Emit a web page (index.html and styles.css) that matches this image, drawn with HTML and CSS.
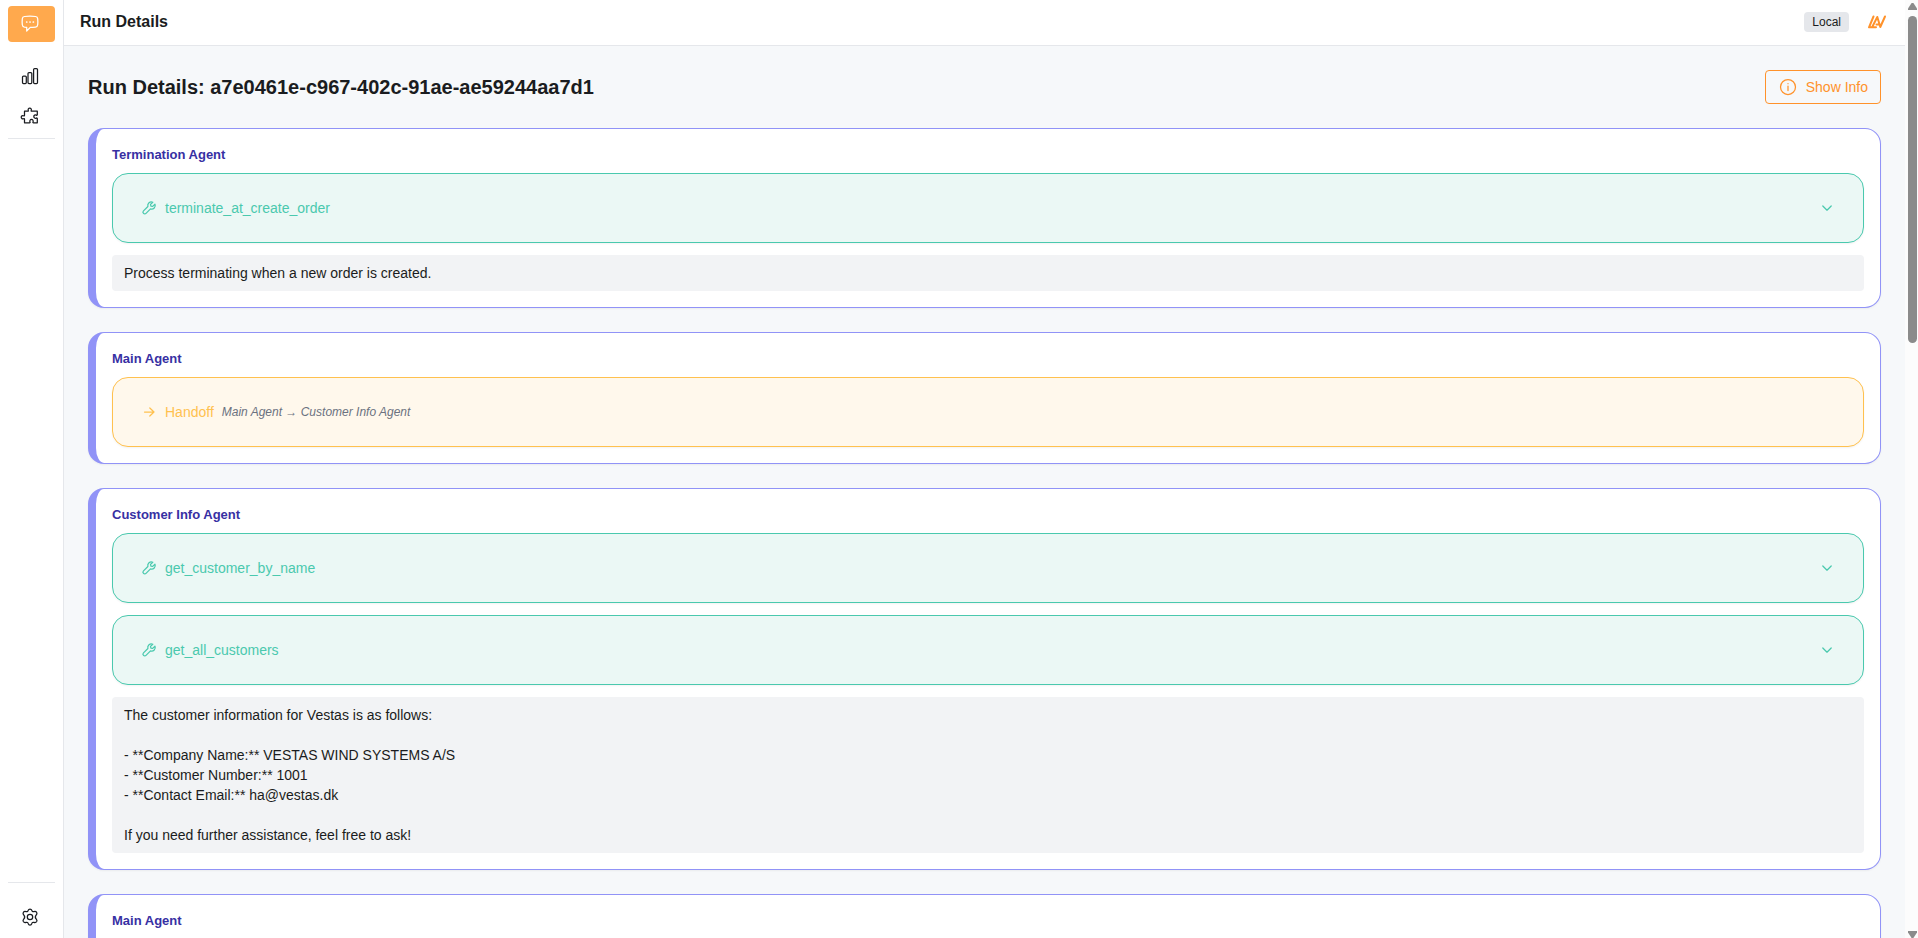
FILE: index.html
```
<!DOCTYPE html>
<html lang="en">
<head>
    <meta charset="UTF-8">
    <meta name="viewport" content="width=device-width, initial-scale=1.0">
    <title>Run Details</title>
    <link rel="stylesheet" href="styles.css">
</head>
<body>
    <svg class="symbols" aria-hidden="true">
        <symbol id="wrench" viewBox="0 0 16 16">
            <path d="M11.800 2.200a3.600 3.600 0 0 0-4.900 4.300L2.500 10.900a1.700 1.700 0 0 0 2.500 2.500l4.500-4.500a3.600 3.600 0 0 0 4.500-4.700l-2.300 2.200-1.800-.3-.4-1.700z"/>
        </symbol>
        <symbol id="chevron" viewBox="0 0 16 16">
            <path d="M3.800 6 8 10.2 12.2 6"/>
        </symbol>
    </svg>

    <nav class="sidebar">
        <a class="nav-item active" href="#" aria-label="Runs">
            <svg class="icon" viewBox="0 0 20 20">
                <path d="M4.500 2.500c3.500-.4 7.500-.4 11 0a2.500 2.500 0 0 1 2.200 2.300c.2 2 .2 4 0 6a2.500 2.500 0 0 1-2.200 2.300c-1.700.2-3.500.3-5.200.3L6.700 17v-3.700l-2.200-.2a2.500 2.500 0 0 1-2.200-2.300c-.2-2-.2-4 0-6a2.500 2.500 0 0 1 2.200-2.300z"/>
                <path d="M6.700 8h.1M10 8h.1M13.300 8h.1" stroke-width="1.700"/>
            </svg>
        </a>
        <div class="nav-group">
            <a class="nav-item" href="#" aria-label="Metrics">
                <svg class="icon" viewBox="0 0 20 20">
                    <rect x="2.500" y="10" width="3.800" height="7.500" rx="1"/>
                    <rect x="8" y="6.500" width="3.800" height="11" rx="1"/>
                    <rect x="13.600" y="2.500" width="3.900" height="15" rx="1"/>
                </svg>
            </a>
            <a class="nav-item" href="#" aria-label="Plugins">
                <svg class="icon" viewBox="0 0 20 20">
                    <path d="M4.500 5.200h3.300c.6 0 .8-.4.500-.9a1.600 1.600 0 1 1 2.900 0c-.3.500-.1.900.5.900H17.300v3.600c-.1.500-.5.600-1 .3a1.700 1.700 0 1 0 0 3c.5-.3 1-.1 1 .4v4.300h-3.800c-.6 0-.8-.4-.5-.9a1.700 1.700 0 1 0-3 0c.3.500.1.900-.5.900H4.500v-3.600c0-.6-.5-.8-1-.5a1.600 1.600 0 1 1 0-2.900c.5.300 1 .1 1-.5z"/>
                </svg>
            </a>
        </div>
        <div class="nav-bottom">
            <a class="nav-item" href="#" aria-label="Settings">
                <svg class="icon" viewBox="0 0 20 20">
                    <path d="M8.300 3.200Q8.600 2 10 2t1.700 1.200q.4 1.900 2.300 1.400 1.800-.6 2.700.9.700 1.300-.4 2.300-2 2.200 0 4.400 1.100 1 .4 2.300-.9 1.500-2.700.9-1.900-.5-2.300 1.400Q11.400 18 10 18t-1.700-1.200Q7.900 14.900 6 15.400q-1.800.6-2.700-.9-.7-1.300.4-2.300 2-2.200 0-4.400-1.100-1-.4-2.300.9-1.500 2.700-.9 1.900.5 2.300-1.400z"/>
                    <circle cx="10" cy="10" r="2.700"/>
                </svg>
            </a>
        </div>
    </nav>

    <div class="page">
        <header class="topbar">
            <span class="topbar-title">Run Details</span>
            <span class="badge">Local</span>
            <svg class="logo" viewBox="0 0 20 16" aria-hidden="true">
                <path d="M6.500 2.500 2 13.300h7M5.500 12.500 10.300 3l3 10L18 2.500M9.500 10.500h1.500"/>
            </svg>
        </header>

        <main class="content">
            <div class="heading">
                <h1>Run Details: a7e0461e-c967-402c-91ae-ae59244aa7d1</h1>
                <button type="button" class="info-button">
                    <svg class="icon" viewBox="0 0 20 20">
                        <circle cx="10" cy="10" r="7.500"/>
                        <path d="M10 9v4.500M10 6.500v.2"/>
                    </svg>
                    Show Info
                </button>
            </div>

            <section class="card">
                <h2>Termination Agent</h2>
                <button type="button" class="step tool">
                    <svg class="icon-small"><use href="#wrench"/></svg>
                    <span>terminate_at_create_order</span>
                    <svg class="icon-small chevron"><use href="#chevron"/></svg>
                </button>
                <div class="message">Process terminating when a new order is created.</div>
            </section>

            <section class="card">
                <h2>Main Agent</h2>
                <div class="step handoff">
                    <svg class="icon-small" viewBox="0 0 16 16"><path d="M3.500 8h9.500M8.800 4 13 8l-4.200 4"/></svg>
                    <span>Handoff</span>
                    <em>Main Agent → Customer Info Agent</em>
                </div>
            </section>

            <section class="card">
                <h2>Customer Info Agent</h2>
                <button type="button" class="step tool">
                    <svg class="icon-small"><use href="#wrench"/></svg>
                    <span>get_customer_by_name</span>
                    <svg class="icon-small chevron"><use href="#chevron"/></svg>
                </button>
                <button type="button" class="step tool">
                    <svg class="icon-small"><use href="#wrench"/></svg>
                    <span>get_all_customers</span>
                    <svg class="icon-small chevron"><use href="#chevron"/></svg>
                </button>
                <div class="message">The customer information for Vestas is as follows:

- **Company Name:** VESTAS WIND SYSTEMS A/S
- **Customer Number:** 1001
- **Contact Email:** ha@vestas.dk

If you need further assistance, feel free to ask!</div>
            </section>

            <section class="card">
                <h2>Main Agent</h2>
                <div class="step handoff"></div>
            </section>
        </main>
    </div>

    <div class="scrollbar" aria-hidden="true">
        <div class="arrow-up"></div>
        <div class="thumb"></div>
        <div class="arrow-down"></div>
    </div>
</body>
</html>
```
FILE: styles.css
```
* {
    box-sizing: border-box;
}
body {
    display: flex;
    height: 100vh;
    margin: 0;
    overflow: hidden;
    background-color: #f6f8fa;
    color: #1a1c20;
    font-family: "Liberation Sans", Arial, sans-serif;
    font-size: 14px;
    line-height: 20px;
}
button {
    font: inherit;
    cursor: pointer;
}
h1, h2 {
    margin: 0;
}
svg {
    flex-shrink: 0;
    fill: none;
    stroke: currentColor;
    stroke-width: 1.25;
    stroke-linecap: round;
    stroke-linejoin: round;
}
.symbols {
    display: none;
}
.icon {
    width: 20px;
    height: 20px;
}
.icon-small {
    width: 16px;
    height: 16px;
}

/* Sidebar */
.sidebar {
    display: flex;
    flex-direction: column;
    flex-shrink: 0;
    width: 64px;
    padding: 6px 8px 3px;
    background-color: white;
    border-right: 1px solid #e5e7eb;
}
.nav-item {
    display: flex;
    align-items: center;
    height: 36px;
    padding: 0 12px;
    border-radius: 4px;
    color: #1a1c20;
}
.nav-item.active {
    background-color: #ffa94d;
    color: white;
}
.nav-group {
    display: flex;
    flex-direction: column;
    gap: 4px;
    margin-top: 16px;
    padding-bottom: 4px;
    border-bottom: 1px solid #e5e7eb;
}
.nav-bottom {
    margin-top: auto;
    padding-top: 16px;
    border-top: 1px solid #e5e7eb;
}

/* Top bar */
.page {
    flex: 1;
    min-width: 0;
    overflow: hidden;
}
.topbar {
    display: flex;
    align-items: center;
    height: 46px;
    padding: 0 16px 1px;
    background-color: white;
    border-bottom: 1px solid #e5e7eb;
}
.topbar-title {
    margin-right: auto;
    font-size: 16px;
    font-weight: bold;
    line-height: 24px;
}
.badge {
    padding: 0 8px;
    background-color: #e5e7eb;
    border-radius: 4px;
    font-size: 12px;
}
.logo {
    width: 20px;
    height: 16px;
    margin: 0 2px 0 18px;
    color: #ff922b;
    stroke-width: 2;
}

/* Run steps */
.content {
    display: flex;
    flex-direction: column;
    gap: 24px;
    padding: 24px;
}
.heading {
    display: flex;
    align-items: center;
    justify-content: space-between;
}
h1 {
    font-size: 20px;
    line-height: 28px;
}
.info-button {
    display: flex;
    align-items: center;
    gap: 8px;
    height: 34px;
    padding: 0 12px;
    background-color: transparent;
    border: 1px solid #ff922b;
    border-radius: 4px;
    color: #ff922b;
}
.card {
    display: flex;
    flex-direction: column;
    gap: 12px;
    padding: 16px;
    background-color: white;
    border: 1px solid #9193f7;
    border-left-width: 8px;
    border-radius: 16px;
    box-shadow: 0 1px 2px rgba(0, 0, 0, 0.05);
}
h2 {
    margin-bottom: -4px;
    color: #3730a3;
    font-size: 13px;
    line-height: 20px;
}
.step {
    display: flex;
    align-items: center;
    gap: 8px;
    width: 100%;
    height: 70px;
    padding: 0 28px;
    border: 1px solid;
    border-radius: 16px;
    box-shadow: 0 1px 2px rgba(0, 0, 0, 0.05);
    text-align: left;
}
.tool {
    background-color: #ebf8f5;
    color: #4ac9ae;
}
.handoff {
    background-color: #fff8ec;
    color: #ffc14f;
}
.handoff em {
    color: #6b7280;
    font-size: 12px;
}
.chevron {
    margin-left: auto;
}
.message {
    padding: 8px 12px;
    background-color: #f2f3f5;
    border-radius: 4px;
    white-space: pre-wrap;
}

/* Scrollbar */
.scrollbar {
    display: flex;
    flex-direction: column;
    align-items: center;
    flex-shrink: 0;
    width: 13px;
    padding: 3px 0 0 2px;
    background-color: #fcfcfc;
}
.thumb {
    width: 9px;
    height: 35%;
    margin-top: 6px;
    background-color: #8b8b8b;
    border-radius: 5px;
}
.arrow-up, .arrow-down {
    width: 9px;
    height: 7px;
    background-color: #8b8b8b;
    clip-path: polygon(40% 0, 60% 0, 100% 80%, 100% 100%, 0 100%, 0 80%);
}
.arrow-down {
    margin-top: auto;
    transform: rotate(180deg);
}
```
